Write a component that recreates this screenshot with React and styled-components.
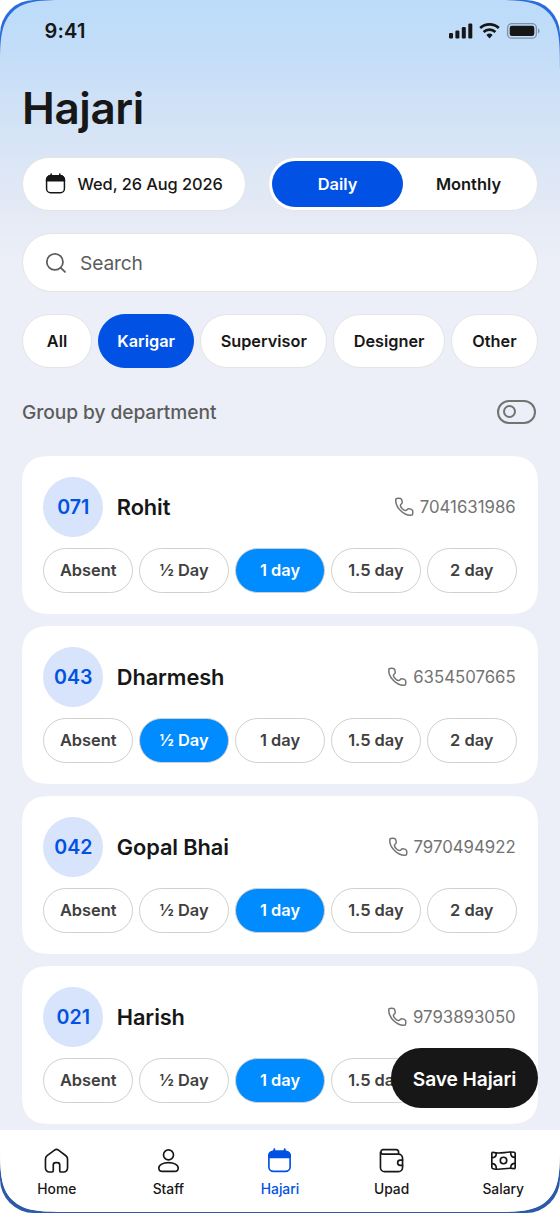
import React from "react";
import styled, { createGlobalStyle } from "styled-components";

const Global = createGlobalStyle`
  * { box-sizing: border-box; }
  body { margin: 0; background: #fff; font-family: Inter, "Liberation Sans", sans-serif; color: #171717; }
  button { font: inherit; color: inherit; margin: 0; cursor: pointer; }
`;

const Bezel = styled.div`
  width: 560px;
  height: 1213px;
  overflow: hidden;
  border-radius: 34px;
  background: linear-gradient(#2b6cde, #2b5aa6);
`;

const Screen = styled.div`
  position: relative;
  height: 1212.3px;
  display: flex;
  flex-direction: column;
  overflow: hidden;
  border-radius: 43px;
  background: linear-gradient(#bbdcfa 0, #c3ddf8 50px, #d6e4f6 135px, #e5eaf5 215px, #eceff7 260px);

  @supports (corner-shape: superellipse(2)) {
    border-radius: 70px;
    corner-shape: superellipse(1.86);
  }
`;

const StatusBar = styled.div`
  display: flex;
  flex: none;
  align-items: center;
  justify-content: space-between;
  height: 62px;
  padding: 0 20px 0 44.5px;
`;

const Time = styled.span`
  font-size: 20px;
  font-weight: 600;
  line-height: 24px;
  letter-spacing: 0.2px;
`;

const Indicators = styled.svg`
  display: block;
`;

const Content = styled.main`
  flex: 1;
  min-height: 0;
  overflow: hidden;
  display: flex;
  flex-direction: column;
  padding: 0 22px;
`;

const Title = styled.h1`
  margin: 18px 0 20.5px;
  font-size: 44px;
  font-weight: 600;
  line-height: 56px;
  letter-spacing: -0.4px;
`;

const Controls = styled.div`
  display: flex;
  justify-content: space-between;
  flex: none;
  height: 54px;
`;

const DateButton = styled.button`
  display: flex;
  align-items: center;
  gap: 11.5px;
  width: 224px;
  padding: 0 22px;
  border: 1px solid #e4e4e4;
  border-radius: 27px;
  background: #fff;
  font-size: 16.4px;
  font-weight: 500;
  letter-spacing: -0.08px;
  white-space: nowrap;
`;

const Segmented = styled.div`
  display: flex;
  width: 270px;
  padding: 3px;
  border: 1px solid #e4e4e4;
  border-radius: 27px;
  background: #fff;
`;

const Segment = styled.button`
  flex: 1;
  padding: 0;
  border: 0;
  border-radius: 24px;
  background: ${(p) => (p.$active ? "#0152e4" : "transparent")};
  color: ${(p) => (p.$active ? "#fff" : "#171717")};
  font-size: 16.4px;
  font-weight: 600;
`;

const SearchField = styled.div`
  display: flex;
  flex: none;
  align-items: center;
  gap: 13px;
  height: 59px;
  margin-top: 22.5px;
  padding: 0 22px;
  border: 1px solid #e4e4e4;
  border-radius: 30px;
  background: #fff;
  color: #5c5c5c;
  font-size: 19.2px;
  letter-spacing: -0.15px;
`;

const Filters = styled.div`
  display: flex;
  flex: none;
  justify-content: space-between;
  margin-top: 22px;
`;

const Filter = styled.button`
  width: ${(p) => p.$width}px;
  height: 54px;
  padding: 0;
  border: 1px solid ${(p) => (p.$active ? "#0152e4" : "#e4e4e4")};
  border-radius: 28px;
  background: ${(p) => (p.$active ? "#0152e4" : "#fff")};
  color: ${(p) => (p.$active ? "#fff" : "#171717")};
  font-size: 16.3px;
  font-weight: 600;
`;

const GroupRow = styled.div`
  display: flex;
  flex: none;
  align-items: center;
  justify-content: space-between;
  height: 87.5px;
  padding-right: 2px;
  color: #5c5c5c;
  font-size: 19.2px;
  font-weight: 500;
  letter-spacing: -0.08px;
`;

const Toggle = styled.button`
  display: flex;
  align-items: center;
  width: 39px;
  height: 24px;
  padding: 0 4px;
  border: 2px solid #737373;
  border-radius: 12px;
  background: transparent;
`;

const Knob = styled.span`
  width: 13px;
  height: 13px;
  border: 2px solid #737373;
  border-radius: 50%;
`;

const StaffList = styled.div`
  display: flex;
  flex-direction: column;
  gap: 11.5px;
`;

const Card = styled.article`
  flex: none;
  height: 158.5px;
  padding: 21.5px 21.3px 0;
  border-radius: 25px;
  background: #fff;

  @supports (corner-shape: superellipse(2)) {
    border-radius: 31px;
    corner-shape: superellipse(1.5);
  }
`;

const CardHeader = styled.div`
  display: flex;
  align-items: center;
  height: 60px;
`;

const Badge = styled.span`
  display: flex;
  align-items: center;
  justify-content: center;
  width: 60px;
  height: 60px;
  border-radius: 50%;
  background: #d8e4fb;
  color: #0152e4;
  font-size: 19.6px;
  font-weight: 600;
`;

const Name = styled.h2`
  margin: 0 0 0 13.5px;
  font-size: 21.8px;
  font-weight: 600;
  line-height: 28px;
  letter-spacing: -0.1px;
`;

const Phone = styled.span`
  display: flex;
  align-items: center;
  gap: 6px;
  margin-left: auto;
  padding-right: 1px;
  color: #737373;
  font-size: 16.8px;
`;

const Options = styled.div`
  display: grid;
  grid-template-columns: repeat(5, 1fr);
  gap: 6px;
  margin-top: 10.5px;
`;

const Option = styled.button`
  height: 45px;
  padding: 0;
  border: 1.5px solid #d0d0d0;
  border-radius: 23px;
  background: ${(p) => (p.$active ? "#008cff" : "#fff")};
  color: ${(p) => (p.$active ? "#fff" : "#404040")};
  font-size: 16.4px;
  font-weight: 600;
`;

const SaveButton = styled.button`
  position: absolute;
  right: 22px;
  bottom: 104px;
  width: 147px;
  height: 60px;
  padding: 1px 0 0;
  border: 0;
  border-radius: 30px;
  background: #171717;
  color: #fff;
  font-size: 19.2px;
  font-weight: 600;
  letter-spacing: -0.1px;
`;

const TabBar = styled.nav`
  display: grid;
  flex: none;
  grid-template-columns: repeat(5, 1fr);
  height: 82px;
  padding: 18px 1px 0;
  background: #fff;
`;

const Tab = styled.a`
  display: flex;
  flex-direction: column;
  align-items: center;
  gap: 5.5px;
  color: ${(p) => (p.$active ? "#0152e4" : "#171717")};
  font-size: 13.8px;
  font-weight: 500;
  line-height: 20px;
`;

const Glyph = styled.svg`
  flex: none;
`;

const Icon = ({ size = 24, stroke = 1.6, children }) => (
  <Glyph width={size} height={size} viewBox="0 0 24 24" fill="none" stroke="currentColor" strokeWidth={stroke} strokeLinecap="round" strokeLinejoin="round">
    {children}
  </Glyph>
);

const calendar = (
  <>
    <path d="M7 1.300v3M17 1.300v3" strokeWidth="1.900" />
    <rect x="1.800" y="3.200" width="20.400" height="19.300" rx="4.500" />
    <path d="M1.800 9V7.700a4.500 4.500 0 0 1 4.500-4.500h11.400a4.500 4.500 0 0 1 4.500 4.500V9Z" fill="currentColor" />
  </>
);

const tabs = [
  ["Home", <path d="M5.100 23h2.700a1.100 1.100 0 0 0 1.100-1.100v-5.600a2.300 2.300 0 0 1 2.300-2.300h1.600a2.300 2.300 0 0 1 2.300 2.300v5.600a1.100 1.100 0 0 0 1.100 1.100h2.700a3.700 3.700 0 0 0 3.700-3.700v-8.700a4 4 0 0 0-1.600-3.200l-6.800-5.200a3.600 3.600 0 0 0-4.400 0L3 7.400a4 4 0 0 0-1.600 3.200v8.700A3.700 3.700 0 0 0 5.100 23Z" />],
  ["Staff", <><circle cx="12" cy="6.600" r="4.800" /><path d="M2.700 19.200c0-3.100 4.100-5.100 9.300-5.100s9.300 2 9.300 5.100c0 2-1.400 3.300-3.400 3.300H6.100c-2 0-3.400-1.300-3.400-3.300Z" /></>],
  ["Hajari", calendar],
  ["Upad", <><path d="M1.400 4v14.700a4 4 0 0 0 4 4h13.200a4 4 0 0 0 4-4v-8.800a4 4 0 0 0-4-4H3.600a2.200 2.200 0 0 1 0-4.300h13a2.200 2.200 0 0 1 2.200 2.200v2.200" /><path d="M22.600 11.700h-2.200a2.500 2.500 0 0 0 0 5h2.200" /></>],
  ["Salary", <><path d="M2.300 4.200c6.500 2.200 13-1.400 20-.1.600.1.900.6.900 1.100v13.400c0 .8-.5 1.300-1.300 1.200-6.600-1.500-12.900 2-19.800.1-.8-.2-1.300-.7-1.300-1.400V5.200c0-.8.700-1.300 1.500-1Z" /><circle cx="12" cy="12" r="3.100" /><path d="M.8 9.300c3 0 4.300-1.500 4.300-4.300M23.200 9c-2.700 0-4.300-1.800-4.300-4.500M.8 15c2.800 0 4.300 2 4.300 4.700M23.200 14.800c-2.900 0-4.300 1.700-4.300 4.400" /></>],
];

const filters = [["All", 70], ["Karigar", 96.5], ["Supervisor", 127], ["Designer", 112], ["Other", 87]];
const staff = [
  ["071", "Rohit", "7041631986", 2],
  ["043", "Dharmesh", "6354507665", 1],
  ["042", "Gopal Bhai", "7970494922", 2],
  ["021", "Harish", "9793893050", 2],
];
const options = ["Absent", "½ Day", "1 day", "1.5 day", "2 day"];

function StatusIndicators() {
  return (
    <Indicators width="91" height="18" viewBox="0 0 91 18" fill="#171717">
      <rect x="0" y="11" width="4" height="5.500" rx="1.200" />
      <rect x="6.400" y="8.500" width="4" height="8" rx="1.200" />
      <rect x="12.800" y="5" width="4" height="11.500" rx="1.200" />
      <rect x="19.300" y="1.500" width="4" height="15" rx="1.200" />
      <g fill="none" stroke="#171717" strokeWidth="2.700">
        <path d="M31.200 6.100a13.600 13.600 0 0 1 18.600 0" />
        <path d="M34.600 10a8.600 8.600 0 0 1 11.800 0" />
      </g>
      <path d="M37.400 13a4.600 4.600 0 0 1 6.200 0L40.500 16.500Z" />
      <rect x="58.600" y="1.600" width="28.800" height="14.600" rx="4.300" fill="none" stroke="#171717" strokeOpacity=".38" strokeWidth="1.300" />
      <rect x="60.700" y="3.800" width="24.600" height="10.200" rx="2.200" />
      <path d="M89 6.400c2 .8 2 4.200 0 5Z" fillOpacity=".4" />
    </Indicators>
  );
}

export default function App() {
  return (
    <>
      <Global />
      <Bezel>
        <Screen>
          <StatusBar>
            <Time>9:41</Time>
            <StatusIndicators />
          </StatusBar>
          <Content>
            <Title>Hajari</Title>
            <Controls>
              <DateButton><Icon size={21} stroke={1.700}>{calendar}</Icon>Wed, 26 Aug 2026</DateButton>
              <Segmented>
                <Segment $active>Daily</Segment>
                <Segment>Monthly</Segment>
              </Segmented>
            </Controls>
            <SearchField>
              <Icon size={22} stroke={1.900}><circle cx="10.800" cy="10.800" r="8.800" /><path d="m17.200 17.200 4.600 4.600" /></Icon>
              Search
            </SearchField>
            <Filters>
              {filters.map(([label, width], i) => <Filter key={label} $width={width} $active={i === 1}>{label}</Filter>)}
            </Filters>
            <GroupRow>
              Group by department
              <Toggle aria-label="Group by department"><Knob /></Toggle>
            </GroupRow>
            <StaffList>
              {staff.map(([id, name, phone, selected]) => (
                <Card key={id}>
                  <CardHeader>
                    <Badge>{id}</Badge>
                    <Name>{name}</Name>
                    <Phone>
                      <Icon size={20} stroke={1.800}>
                        <path d="M2.300 2.200C3.700 1.200 7.200 1.200 8.300 2c.8.600 1.600 3 1.600 4.500 0 1.700-2.500 2.100-2.200 3.800.3 2.300 3.700 5.700 6 6 1.700.3 2.100-2.200 3.800-2.200 1.500 0 3.900.8 4.500 1.600.8 1.100.8 4.600-.2 6C12 23.300.7 12 2.300 2.200Z" />
                      </Icon>
                      {phone}
                    </Phone>
                  </CardHeader>
                  <Options>
                    {options.map((label, i) => <Option key={label} $active={i === selected}>{label}</Option>)}
                  </Options>
                </Card>
              ))}
            </StaffList>
          </Content>
          <SaveButton>Save Hajari</SaveButton>
          <TabBar>
            {tabs.map(([label, shape]) => (
              <Tab key={label} $active={label === "Hajari"}><Icon size={25}>{shape}</Icon>{label}</Tab>
            ))}
          </TabBar>
        </Screen>
      </Bezel>
    </>
  );
}
